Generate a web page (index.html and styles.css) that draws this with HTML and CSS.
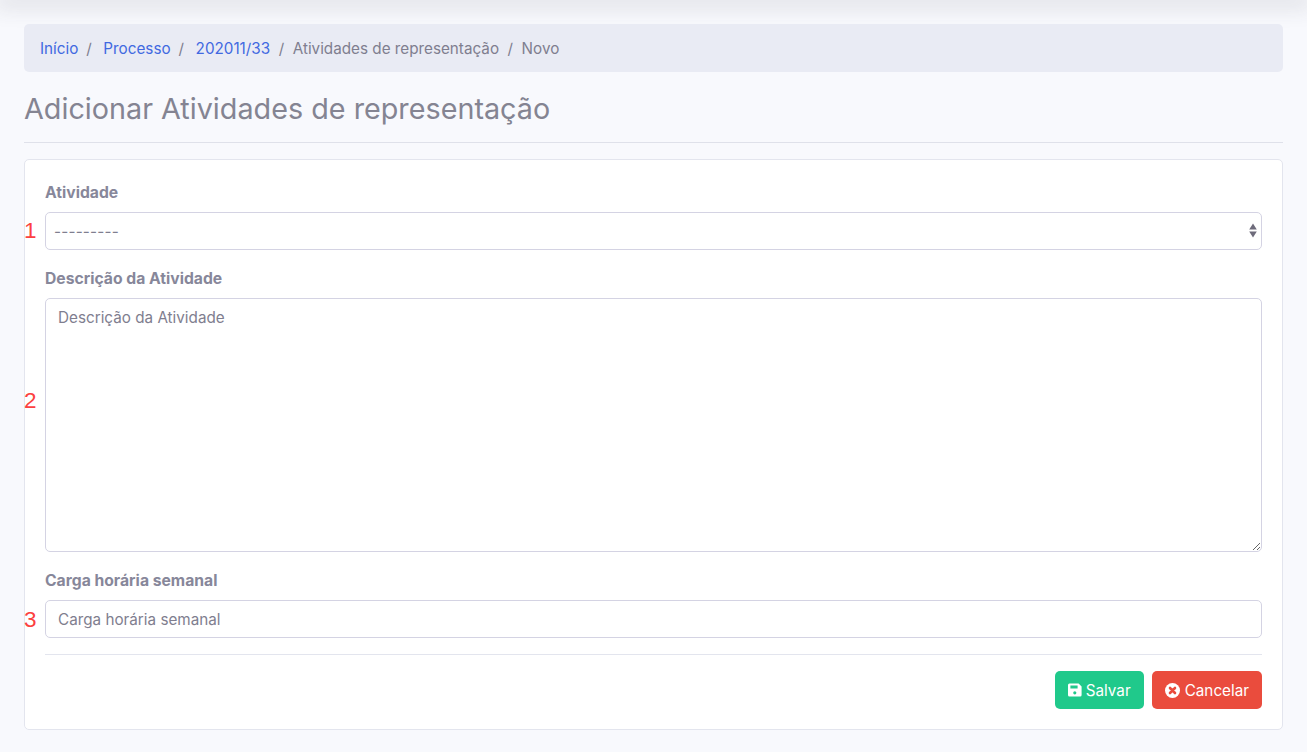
FILE: index.html
```html
<!DOCTYPE html>
<html lang="pt-BR">
<head>
<meta charset="utf-8">
<title>Adicionar Atividades de representação</title>
<link rel="stylesheet" href="styles.css">
</head>
<body>
<div class="topbar"></div>
<main class="page">
  <nav class="breadcrumb">
    <a href="#">Início</a><span class="sep sep-link">/</span>
    <a href="#">Processo</a><span class="sep sep-link">/</span>
    <a href="#">202011/33</a><span class="sep">/</span>
    <span>Atividades de representação</span><span class="sep">/</span>
    <span>Novo</span>
  </nav>
  <h1 class="title">Adicionar Atividades de representação</h1>
  <form class="card">
    <div class="field">
      <label class="label" for="a">Atividade</label>
      <div class="control">
        <span class="mark mark-1">1</span>
        <select id="a" class="input select"><option>---------</option></select>
        <svg class="arrows" width="8" height="15" viewBox="0 0 8 15"><path d="M4 0.5 L7.8 6.5 H0.2 Z M0.2 8.5 H7.8 L4 14.5 Z" fill="#6e6b7b"/></svg>
      </div>
    </div>
    <div class="field">
      <label class="label" for="d">Descrição da Atividade</label>
      <div class="control">
        <span class="mark mark-2">2</span>
        <textarea id="d" class="input area" placeholder="Descrição da Atividade"></textarea>
      </div>
    </div>
    <div class="field">
      <label class="label" for="c">Carga horária semanal</label>
      <div class="control">
        <span class="mark mark-3">3</span>
        <input id="c" class="input" type="text" placeholder="Carga horária semanal">
      </div>
    </div>
    <div class="actions">
      <button type="button" class="btn btn-save">
        <svg class="icon" width="14" height="14" viewBox="0 0 14 14"><path fill-rule="evenodd" d="M1.5 .4 H10.6 L13.6 3.4 V12 A1.5 1.5 0 0 1 12.1 13.5 H1.5 A1.5 1.5 0 0 1 0 12 V1.9 A1.5 1.5 0 0 1 1.5 .4 Z M2.4 2.6 V5.6 H9.6 V2.6 Z M6.8 8.2 A1.6 1.6 0 1 0 6.8 11.4 A1.6 1.6 0 1 0 6.8 8.2 Z" fill="#fff"/></svg>
        Salvar
      </button>
      <button type="button" class="btn btn-cancel">
        <svg class="icon" width="15" height="15" viewBox="0 0 15 15"><circle cx="7.5" cy="7.5" r="7.5" fill="#fff"/><path d="M5 5 L10 10 M10 5 L5 10" stroke="#ea4c3d" stroke-width="2.6" stroke-linecap="round"/></svg>
        Cancelar
      </button>
    </div>
  </form>
</main>
</body>
</html>
```
FILE: styles.css
```css
* { box-sizing: border-box; }
html, body { margin: 0; height: 100%; overflow: hidden; }
body {
  background: #f8f9fd;
  font-family: Inter, "Liberation Sans", sans-serif;
  font-size: 15.25px;
  line-height: 21px;
  color: #7f7e8f;
}
.topbar {
  height: 0;
  box-shadow: 0 0 22px 6px rgba(60, 60, 70, .18);
}
.page { padding: 24px 24px 0; }
.breadcrumb {
  display: flex;
  align-items: center;
  height: 48px;
  padding: 0 16px;
  background: #e9ebf4;
  border-radius: 5px;
  white-space: nowrap;
}
.breadcrumb a { color: #4169e1; text-decoration: none; }
.sep { margin: 0 8.5px; }
.sep.sep-link { margin: 0 11.5px 0 8px; }
.title {
  margin: 0;
  padding: 19px 0 15px;
  border-bottom: 1px solid #dfe1ea;
  font-size: 28.75px;
  line-height: 36px;
  font-weight: 400;
  color: #848492;
  height: 71px;
}
.card {
  margin-top: 16px;
  height: 571px;
  padding: 21px 20px 0;
  background: #fff;
  border: 1px solid #e3e5ee;
  border-radius: 5px;
}
.field { margin-bottom: 17px; }
.label {
  display: block;
  height: 21px;
  margin-bottom: 10px;
  padding-top: 1px;
  font-size: 15.7px;
  font-weight: 700;
  color: #87879a;
}
.control { position: relative; }
.input {
  display: block;
  width: 100%;
  height: 38px;
  padding: 0 12px;
  background: #fff;
  border: 1px solid #d4d3e3;
  border-radius: 5px;
  font: inherit;
  color: #7f7e8f;
  outline: 0;
}
.input::placeholder { color: #7f7e8f; opacity: 1; }
.select { appearance: none; padding-left: 8px; letter-spacing: .2px; }
.area { height: 254px; padding: 8px 12px; resize: vertical; }
.arrows { position: absolute; right: 5px; top: 11px; }
.mark {
  position: absolute;
  left: -21px;
  font-family: "Liberation Sans", sans-serif;
  font-size: 22.5px;
  line-height: 24px;
  color: #fc4040;
}
.mark-1 { top: 7px; }
.mark-2 { top: 91px; }
.mark-3 { top: 8px; }
.actions {
  display: flex;
  justify-content: flex-end;
  gap: 8px;
  margin-top: -1px;
  padding-top: 16px;
  border-top: 1px solid #e3e5ee;
}
.btn {
  display: inline-flex;
  align-items: center;
  gap: 4px;
  height: 38px;
  padding: 0 13px;
  border: 0;
  border-radius: 5px;
  font: inherit;
  color: #fff;
}
.btn-save { background: #20c98b; }
.btn-cancel { background: #ea4c3d; gap: 5px; }
.icon { display: block; }
```
